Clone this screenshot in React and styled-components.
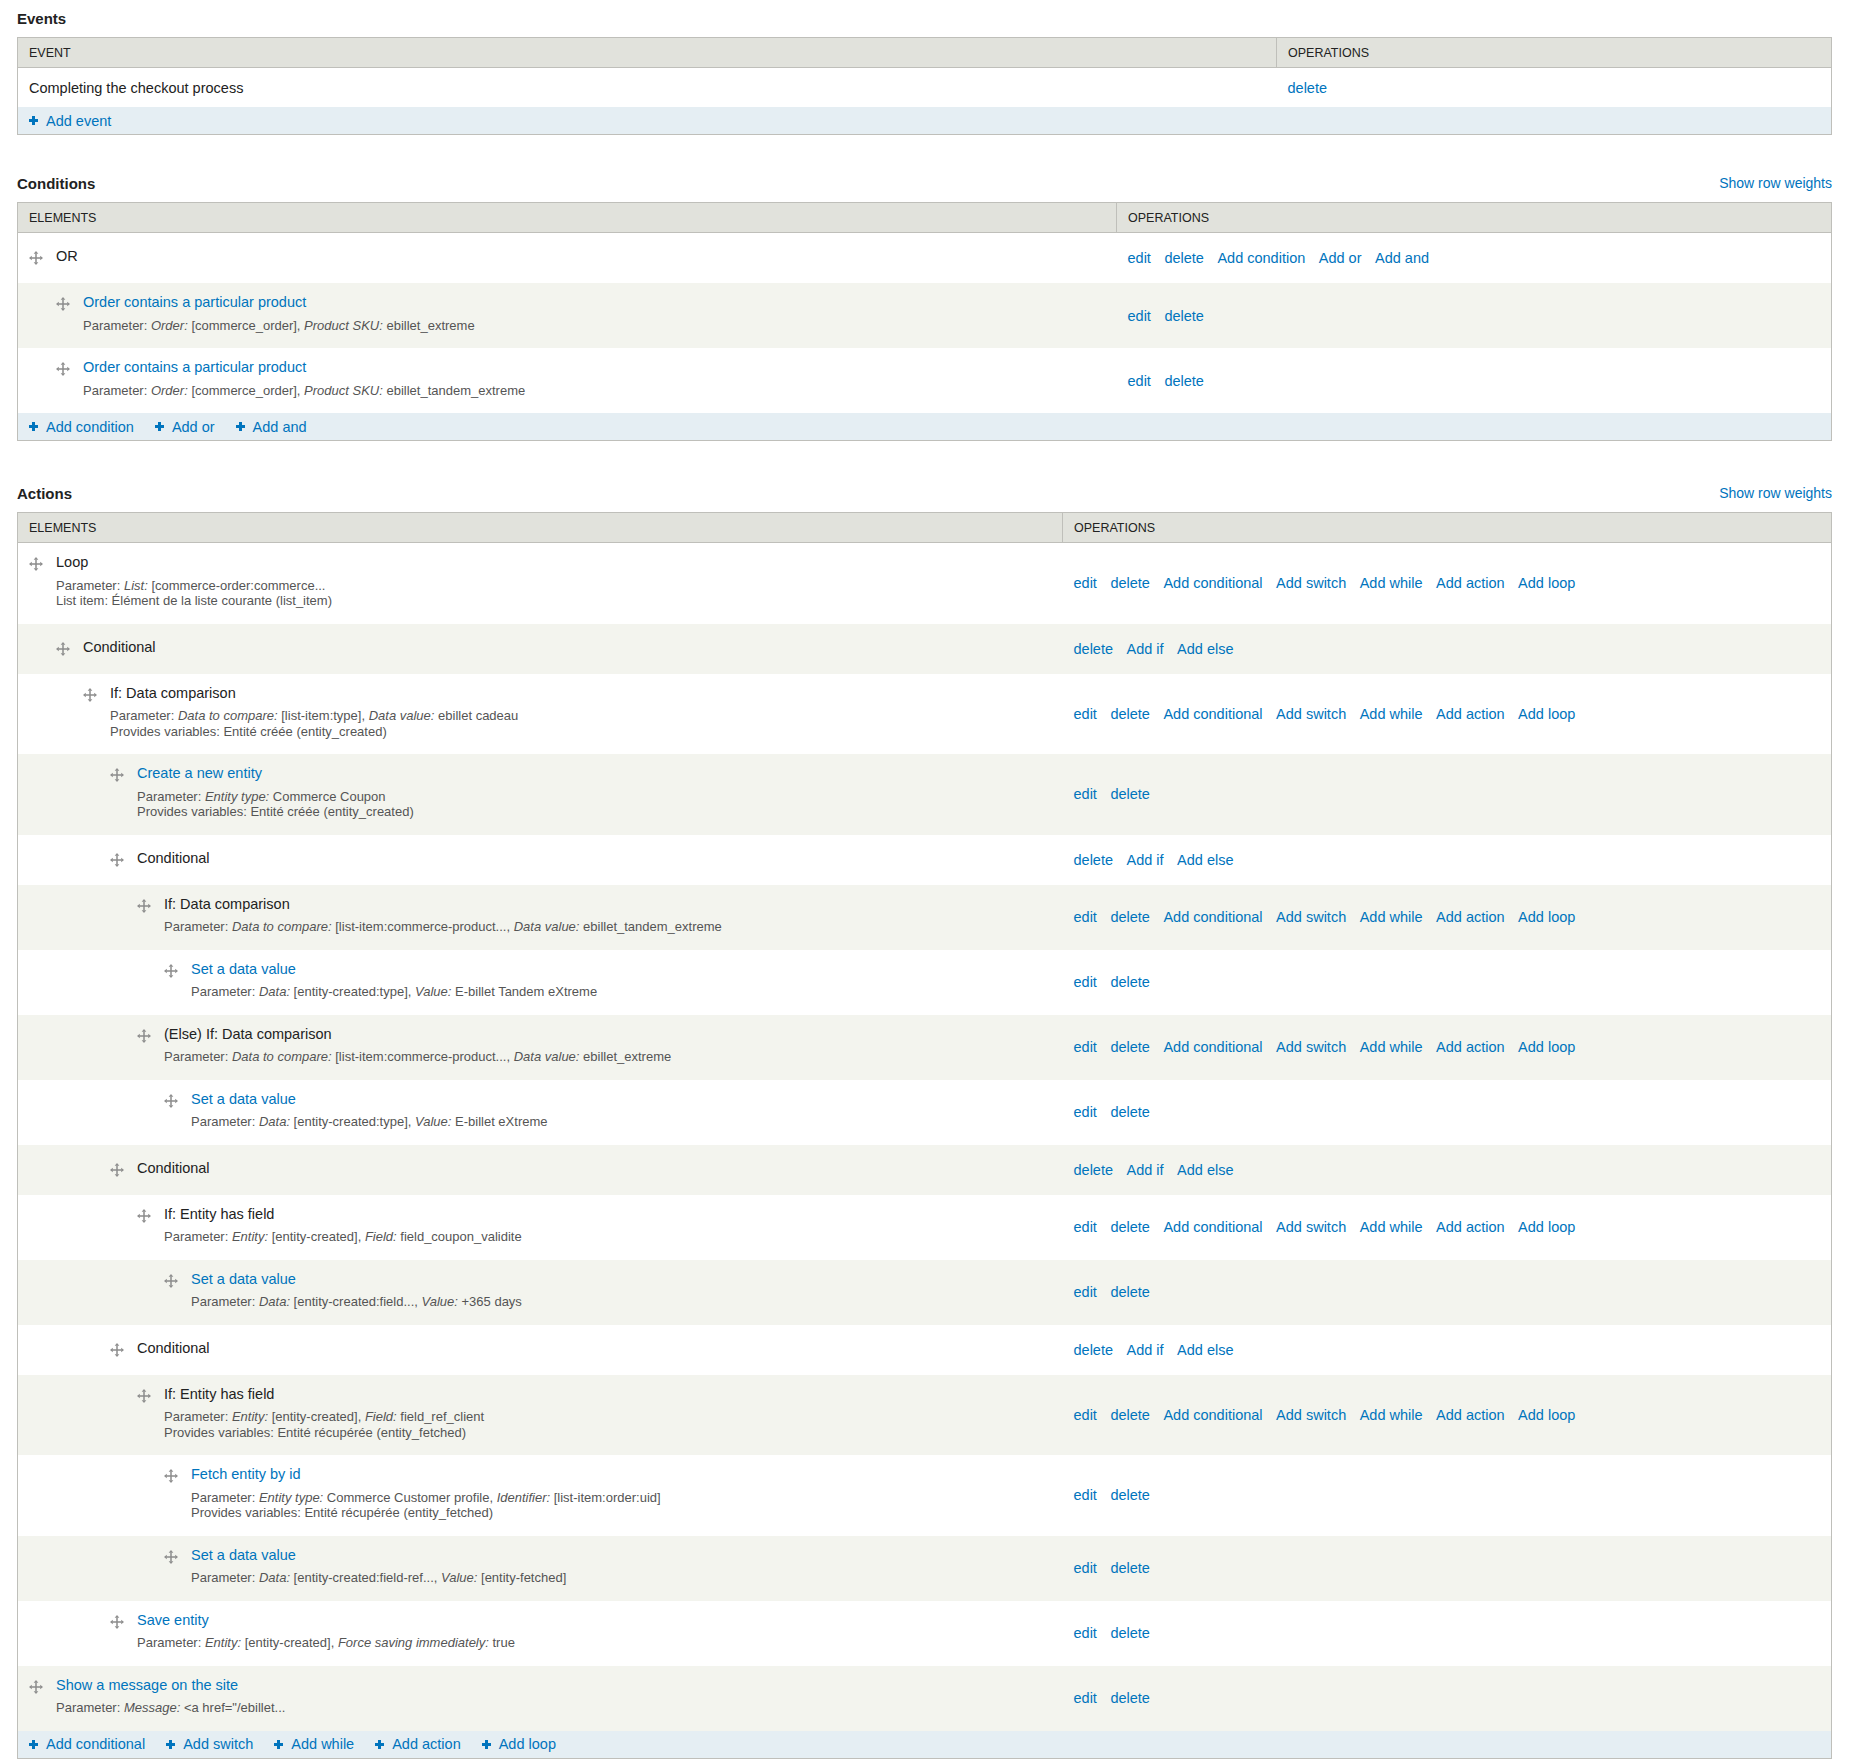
import React from 'react';
import styled, { createGlobalStyle } from 'styled-components';

const FONT = '"Liberation Sans", Arial, sans-serif';

const GlobalStyle = createGlobalStyle`
  body {
    margin: 0;
    background: #fff;
    color: #333;
    font-family: ${FONT};
  }
`;

const Page = styled.div`
  padding: 8px 31px 0 17px;
`;

const SectionHead = styled.div`
  display: flex;
  justify-content: space-between;
  align-items: center;
  height: 20px;
  margin-top: ${p => p.$top || 0}px;
  margin-bottom: 9px;
`;

const Heading = styled.h2`
  margin: 0;
  font-size: 15px;
  font-weight: bold;
  color: #222;
`;

const Link = styled.a`
  color: #0074bd;
  text-decoration: none;
  cursor: pointer;
`;

const WeightsLink = styled(Link)`
  font-size: 14px;
`;

const Table = styled.table`
  width: 100%;
  border-collapse: collapse;
  table-layout: fixed;
  border: 1px solid #bfbfba;
`;

const Col = styled.col`
  width: ${p => (p.$w ? `${p.$w}px` : 'auto')};
`;

const HeadCell = styled.th`
  height: 29px;
  padding: 0 11px;
  background: #e1e2dc;
  border-bottom: 1px solid #bfbfba;
  text-align: left;
  font-weight: normal;
  font-size: 12.5px;
  text-transform: uppercase;
  color: #222;
  & + & {
    border-left: 1px solid #bfbfba;
  }
`;

const Row = styled.tr`
  background: ${p => (p.$stripe ? '#f3f4ee' : '#fff')};
`;

const Cell = styled.td`
  height: 39px;
  padding: 0 11px;
  font-size: 14.5px;
  color: #222;
  vertical-align: middle;
`;

const OpsCell = styled.td`
  padding: 0 11px;
  vertical-align: middle;
  font-size: 14.5px;
  line-height: 20px;
`;

const Ops = styled.div`
  display: flex;
  gap: 13.5px;
  white-space: nowrap;
`;

const ElementCell = styled.td`
  padding: ${p => (p.$bare ? '13px 11px 17px' : '9px 11px 15px')};
  vertical-align: top;
`;

const Element = styled.div`
  display: flex;
  align-items: flex-start;
  padding-left: ${p => p.$level * 27}px;
`;

const Handle = styled.svg`
  flex: none;
  width: 14px;
  height: 14px;
  margin: 5px 13px 0 0;
`;

const Body = styled.div`
  min-width: 0;
`;

const Title = styled.div`
  font-size: 14.5px;
  line-height: 20px;
  color: #222;
  white-space: nowrap;
`;

const Description = styled.div`
  margin-top: 5.5px;
  font-size: 13px;
  line-height: 15.5px;
  color: #555;
  white-space: nowrap;
  em {
    font-style: italic;
  }
`;

const FootRow = styled.tr`
  background: #e5eef3;
`;

const FootCell = styled.td`
  height: 27px;
  padding: 0 11px;
  font-size: 14.5px;
`;

const AddLinks = styled.div`
  display: flex;
  gap: 21px;
  white-space: nowrap;
`;

const AddLink = styled(Link)`
  display: inline-flex;
  align-items: center;
  gap: 8px;
`;

const PlusIcon = styled.svg`
  width: 9px;
  height: 9px;
  flex: none;
`;

function DragHandle() {
  return (
    <Handle viewBox="0 0 14 14">
      <g fill="#8c8c8c">
        <rect x="6.25" y="2.5" width="1.5" height="9" />
        <rect x="2.5" y="6.25" width="9" height="1.5" />
        <path d="M7 0 L9.3 2.8 L4.7 2.8 Z" />
        <path d="M7 14 L9.3 11.2 L4.7 11.2 Z" />
        <path d="M0 7 L2.8 4.7 L2.8 9.3 Z" />
        <path d="M14 7 L11.2 4.7 L11.2 9.3 Z" />
      </g>
    </Handle>
  );
}

function Plus() {
  return (
    <PlusIcon viewBox="0 0 9 9">
      <path d="M3 0 H6 V3 H9 V6 H6 V9 H3 V6 H0 V3 H3 Z" fill="#0074bd" />
    </PlusIcon>
  );
}

// "*x*" marks italic parts of a description line
function renderLine(text) {
  return text.split('*').map((part, i) =>
    i % 2 ? <em key={i}>{part}</em> : <React.Fragment key={i}>{part}</React.Fragment>
  );
}

const FULL_OPS = ['edit', 'delete', 'Add conditional', 'Add switch', 'Add while', 'Add action', 'Add loop'];
const COND_OPS = ['delete', 'Add if', 'Add else'];
const BASIC_OPS = ['edit', 'delete'];

const conditions = [
  { level: 0, title: 'OR', ops: ['edit', 'delete', 'Add condition', 'Add or', 'Add and'] },
  {
    level: 1, title: 'Order contains a particular product', link: true, ops: BASIC_OPS,
    desc: ['Parameter: *Order:* [commerce_order], *Product SKU:* ebillet_extreme'],
  },
  {
    level: 1, title: 'Order contains a particular product', link: true, ops: BASIC_OPS,
    desc: ['Parameter: *Order:* [commerce_order], *Product SKU:* ebillet_tandem_extreme'],
  },
];

const actions = [
  {
    level: 0, title: 'Loop', ops: FULL_OPS,
    desc: ['Parameter: *List:* [commerce-order:commerce...', 'List item: Élément de la liste courante (list_item)'],
  },
  { level: 1, title: 'Conditional', ops: COND_OPS },
  {
    level: 2, title: 'If: Data comparison', ops: FULL_OPS,
    desc: [
      'Parameter: *Data to compare:* [list-item:type], *Data value:* ebillet cadeau',
      'Provides variables: Entité créée (entity_created)',
    ],
  },
  {
    level: 3, title: 'Create a new entity', link: true, ops: BASIC_OPS,
    desc: ['Parameter: *Entity type:* Commerce Coupon', 'Provides variables: Entité créée (entity_created)'],
  },
  { level: 3, title: 'Conditional', ops: COND_OPS },
  {
    level: 4, title: 'If: Data comparison', ops: FULL_OPS,
    desc: ['Parameter: *Data to compare:* [list-item:commerce-product..., *Data value:* ebillet_tandem_extreme'],
  },
  {
    level: 5, title: 'Set a data value', link: true, ops: BASIC_OPS,
    desc: ['Parameter: *Data:* [entity-created:type], *Value:* E-billet Tandem eXtreme'],
  },
  {
    level: 4, title: '(Else) If: Data comparison', ops: FULL_OPS,
    desc: ['Parameter: *Data to compare:* [list-item:commerce-product..., *Data value:* ebillet_extreme'],
  },
  {
    level: 5, title: 'Set a data value', link: true, ops: BASIC_OPS,
    desc: ['Parameter: *Data:* [entity-created:type], *Value:* E-billet eXtreme'],
  },
  { level: 3, title: 'Conditional', ops: COND_OPS },
  {
    level: 4, title: 'If: Entity has field', ops: FULL_OPS,
    desc: ['Parameter: *Entity:* [entity-created], *Field:* field_coupon_validite'],
  },
  {
    level: 5, title: 'Set a data value', link: true, ops: BASIC_OPS,
    desc: ['Parameter: *Data:* [entity-created:field..., *Value:* +365 days'],
  },
  { level: 3, title: 'Conditional', ops: COND_OPS },
  {
    level: 4, title: 'If: Entity has field', ops: FULL_OPS,
    desc: [
      'Parameter: *Entity:* [entity-created], *Field:* field_ref_client',
      'Provides variables: Entité récupérée (entity_fetched)',
    ],
  },
  {
    level: 5, title: 'Fetch entity by id', link: true, ops: BASIC_OPS,
    desc: [
      'Parameter: *Entity type:* Commerce Customer profile, *Identifier:* [list-item:order:uid]',
      'Provides variables: Entité récupérée (entity_fetched)',
    ],
  },
  {
    level: 5, title: 'Set a data value', link: true, ops: BASIC_OPS,
    desc: ['Parameter: *Data:* [entity-created:field-ref..., *Value:* [entity-fetched]'],
  },
  {
    level: 3, title: 'Save entity', link: true, ops: BASIC_OPS,
    desc: ['Parameter: *Entity:* [entity-created], *Force saving immediately:* true'],
  },
  {
    level: 0, title: 'Show a message on the site', link: true, ops: BASIC_OPS,
    desc: ['Parameter: *Message:* <a href="/ebillet...'],
  },
];

function OpLinks({ items }) {
  return (
    <Ops>
      {items.map((label, i) => <Link key={i}>{label}</Link>)}
    </Ops>
  );
}

function AddRow({ items }) {
  return (
    <FootRow>
      <FootCell colSpan={2}>
        <AddLinks>
          {items.map(label => (
            <AddLink key={label}><Plus />{label}</AddLink>
          ))}
        </AddLinks>
      </FootCell>
    </FootRow>
  );
}

function ElementTable({ rows, opsWidth, addItems }) {
  return (
    <Table>
      <colgroup>
        <Col />
        <Col $w={opsWidth} />
      </colgroup>
      <thead>
        <tr>
          <HeadCell>Elements</HeadCell>
          <HeadCell>Operations</HeadCell>
        </tr>
      </thead>
      <tbody>
        {rows.map((row, i) => (
          <Row key={i} $stripe={i % 2 === 1}>
            <ElementCell $bare={!row.desc}>
              <Element $level={row.level}>
                <DragHandle />
                <Body>
                  <Title>{row.link ? <Link>{row.title}</Link> : row.title}</Title>
                  {row.desc && (
                    <Description>
                      {row.desc.map((line, j) => <div key={j}>{renderLine(line)}</div>)}
                    </Description>
                  )}
                </Body>
              </Element>
            </ElementCell>
            <OpsCell><OpLinks items={row.ops} /></OpsCell>
          </Row>
        ))}
        <AddRow items={addItems} />
      </tbody>
    </Table>
  );
}

export default function App() {
  return (
    <Page>
      <GlobalStyle />

      <SectionHead>
        <Heading>Events</Heading>
      </SectionHead>
      <Table>
        <colgroup>
          <Col />
          <Col $w={555} />
        </colgroup>
        <thead>
          <tr>
            <HeadCell>Event</HeadCell>
            <HeadCell>Operations</HeadCell>
          </tr>
        </thead>
        <tbody>
          <Row>
            <Cell>Completing the checkout process</Cell>
            <OpsCell><OpLinks items={['delete']} /></OpsCell>
          </Row>
          <AddRow items={['Add event']} />
        </tbody>
      </Table>

      <SectionHead $top={38}>
        <Heading>Conditions</Heading>
        <WeightsLink>Show row weights</WeightsLink>
      </SectionHead>
      <ElementTable rows={conditions} opsWidth={715} addItems={['Add condition', 'Add or', 'Add and']} />

      <SectionHead $top={42}>
        <Heading>Actions</Heading>
        <WeightsLink>Show row weights</WeightsLink>
      </SectionHead>
      <ElementTable
        rows={actions}
        opsWidth={769}
        addItems={['Add conditional', 'Add switch', 'Add while', 'Add action', 'Add loop']}
      />
    </Page>
  );
}
